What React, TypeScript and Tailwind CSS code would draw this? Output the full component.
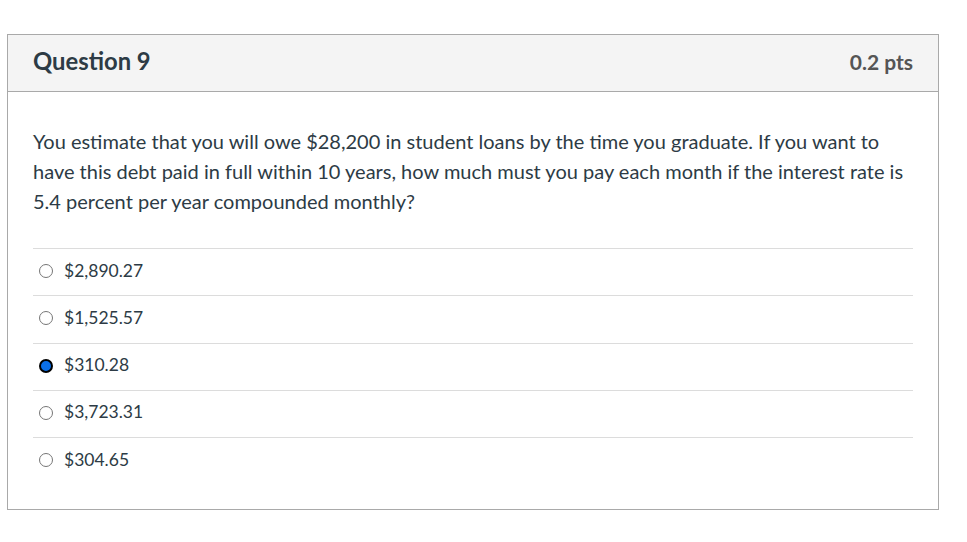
import React from "react";

const answers = [
  { label: "$2,890.27", checked: false },
  { label: "$1,525.57", checked: false },
  { label: "$310.28", checked: true },
  { label: "$3,723.31", checked: false },
  { label: "$304.65", checked: false },
];

export default function App() {
  return (
    <div className="w-[967px] h-[542px] bg-white pt-[34px] pl-[7px]" style={{ fontFamily: "Lato, 'Liberation Sans', sans-serif" }}>
      <div className="w-[932px] h-[476px] border border-[#a9a9a9] text-[#2d3b45]">
        <div className="h-[57px] bg-[#f4f4f4] border-b border-[#a9a9a9] flex items-center justify-between px-[25px] pb-[3px]">
          <span className="text-[23.8px] font-bold text-[#2d3b45]">Question 9</span>
          <span className="text-[21px] font-bold text-[#555]">0.2 pts</span>
        </div>
        <div className="px-[25px] pt-[34px]">
          <p className="text-[20px] leading-[30px] text-[#2d3b45]">
            You estimate that you will owe $28,200 in student loans by the time you graduate. If you want to have this debt paid in full within 10 years, how much must you pay each month if the interest rate is 5.4 percent per year compounded monthly?
          </p>
          <div className="mt-[32px]">
            {answers.map((a) => (
              <div key={a.label} className="h-[47.25px] border-t border-[#dcdcdc] flex items-center pl-[6px] pb-[3px]">
                {a.checked ? (
                  <span className="w-[14px] h-[14px] rounded-full border-[2px] border-black bg-[#0b6fe8] box-border mt-[1px]" />
                ) : (
                  <span className="w-[14px] h-[14px] rounded-full border border-[#767676] bg-white box-border mt-[1px]" />
                )}
                <span className="ml-[11px] text-[17.5px] text-[#2d3b45]">{a.label}</span>
              </div>
            ))}
          </div>
        </div>
      </div>
    </div>
  );
}
